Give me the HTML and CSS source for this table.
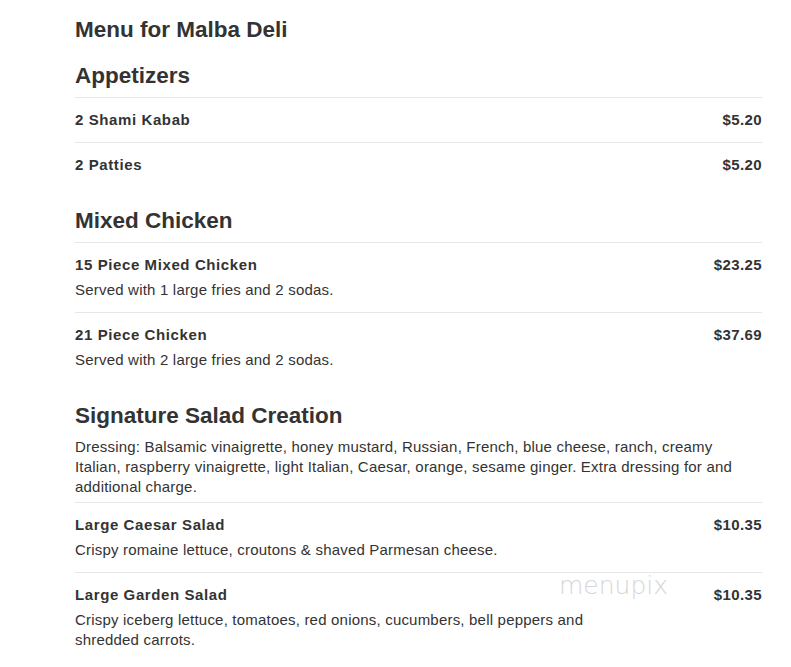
FILE: index.html
```html
<!DOCTYPE html>
<html>
<head>
<meta charset="utf-8">
<link rel="stylesheet" href="styles.css">
</head>
<body>
<div class="menu">
  <h1 class="title">Menu for Malba Deli</h1>

  <section class="section">
    <h2 class="heading">Appetizers</h2>
    <div class="item">
      <div class="row"><span class="name">2 Shami Kabab</span><span class="price">$5.20</span></div>
    </div>
    <div class="item">
      <div class="row"><span class="name">2 Patties</span><span class="price">$5.20</span></div>
    </div>
  </section>

  <section class="section">
    <h2 class="heading">Mixed Chicken</h2>
    <div class="item with-desc">
      <div class="row"><span class="name">15 Piece Mixed Chicken</span><span class="price">$23.25</span></div>
      <p class="desc">Served with 1 large fries and 2 sodas.</p>
    </div>
    <div class="item with-desc">
      <div class="row"><span class="name">21 Piece Chicken</span><span class="price">$37.69</span></div>
      <p class="desc">Served with 2 large fries and 2 sodas.</p>
    </div>
  </section>

  <section class="section">
    <h2 class="heading">Signature Salad Creation</h2>
    <p class="section-desc">Dressing: Balsamic vinaigrette, honey mustard, Russian, French, blue cheese, ranch, creamy Italian, raspberry vinaigrette, light Italian, Caesar, orange, sesame ginger. Extra dressing for and additional charge.</p>
    <div class="item with-desc">
      <div class="row"><span class="name">Large Caesar Salad</span><span class="price">$10.35</span></div>
      <p class="desc">Crispy romaine lettuce, croutons &amp; shaved Parmesan cheese.</p>
    </div>
    <div class="item with-desc watermarked">
      <div class="row"><span class="name">Large Garden Salad</span><span class="price">$10.35</span></div>
      <p class="desc narrow">Crispy iceberg lettuce, tomatoes, red onions, cucumbers, bell peppers and shredded carrots.</p>
      <span class="watermark">menupix</span>
    </div>
  </section>
</div>
</body>
</html>
```

FILE: styles.css
```css
* { box-sizing: border-box; }
html, body { margin: 0; padding: 0; background: #fff; }
body {
  font-family: "Liberation Sans", Arial, sans-serif;
  color: #333;
}
.menu {
  width: 687px;
  margin-left: 75px;
  padding-top: 18px;
}
.title {
  margin: 0 0 22px;
  font-size: 22.5px;
  line-height: 24px;
  font-weight: bold;
}
.section { margin-bottom: 22px; }
.heading {
  margin: 0 0 9px;
  font-size: 22.5px;
  line-height: 24px;
  font-weight: bold;
}
.section-desc {
  margin: 0 0 5px;
  font-size: 15px;
  line-height: 20px;
  letter-spacing: 0.2px;
}
.item {
  border-top: 1px solid #e6e6e6;
  padding: 13px 0;
}
.item.with-desc { padding-bottom: 12px; }
.row {
  display: flex;
  justify-content: space-between;
  font-size: 15px;
  line-height: 18px;
  font-weight: bold;
}
.name { letter-spacing: 0.6px; }
.price { letter-spacing: 0.4px; }
.desc {
  margin: 6px 0 0;
  font-size: 15px;
  line-height: 20px;
  letter-spacing: 0.2px;
}
.desc.narrow { max-width: 550px; }
.watermarked { position: relative; }
.watermark {
  position: absolute;
  left: 484px;
  top: -2px;
  font-family: "DejaVu Sans", sans-serif;
  font-weight: 200;
  font-size: 25px;
  letter-spacing: 0;
  color: #d6d6d6;
}
```
